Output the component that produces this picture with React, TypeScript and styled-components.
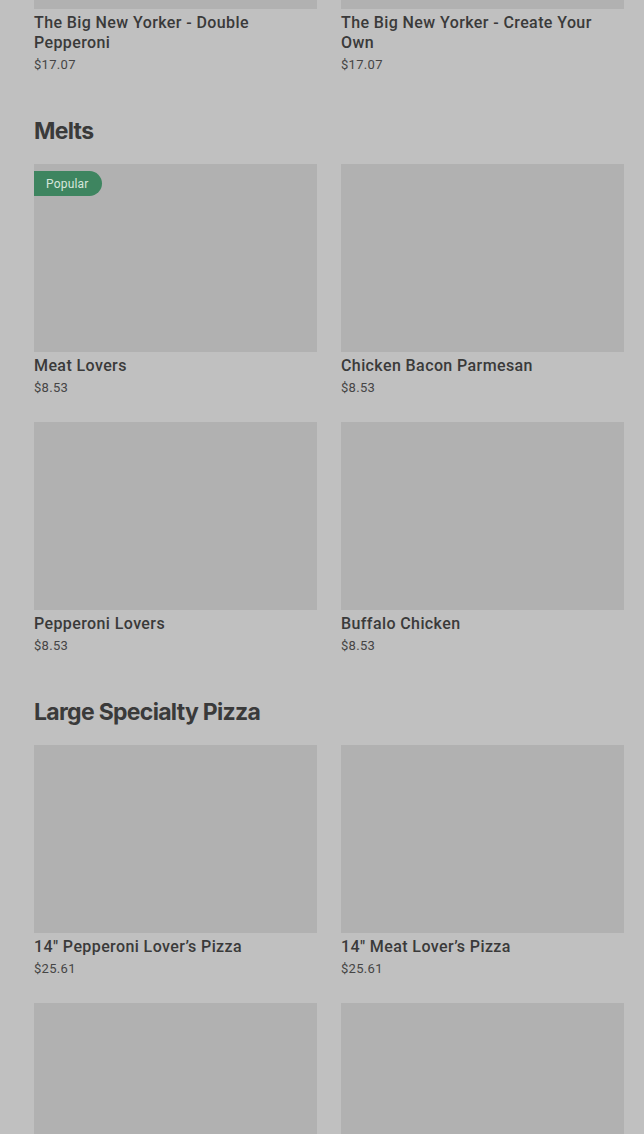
import styled, { createGlobalStyle } from 'styled-components';

const GlobalStyle = createGlobalStyle`
  html, body {
    margin: 0;
    padding: 0;
    background: #c0c0c0;
    overflow: hidden;
  }
  body {
    font-family: Roboto, "Liberation Sans", sans-serif;
    color: #3a3a3a;
  }
`;

type Item = { name: string; price: string; popular?: boolean };
type Section = { title?: string; items: Item[] };

const sections: Section[] = [
  {
    items: [
      { name: 'The Big New Yorker - Double Pepperoni', price: '$17.07' },
      { name: 'The Big New Yorker - Create Your Own', price: '$17.07' },
    ],
  },
  {
    title: 'Melts',
    items: [
      { name: 'Meat Lovers', price: '$8.53', popular: true },
      { name: 'Chicken Bacon Parmesan', price: '$8.53' },
      { name: 'Pepperoni Lovers', price: '$8.53' },
      { name: 'Buffalo Chicken', price: '$8.53' },
    ],
  },
  {
    title: 'Large Specialty Pizza',
    items: [
      { name: '14" Pepperoni Lover\u2019s Pizza', price: '$25.61' },
      { name: '14" Meat Lover\u2019s Pizza', price: '$25.61' },
      { name: '', price: '' },
      { name: '', price: '' },
    ],
  },
];

// page is scrolled: the first card row starts above the viewport
const Page = styled.main`
  margin-top: -179px;
  padding: 0 20px 0 34px;
`;

const MenuSection = styled.section`
  margin-bottom: 41px;
`;

const SectionTitle = styled.h2`
  margin: 0 0 17px;
  height: 32px;
  font-family: Inter, "Liberation Sans", sans-serif;
  font-size: 23px;
  font-weight: 700;
  letter-spacing: -0.7px;
  line-height: 32px;
  color: #3a3a3a;
`;

const Grid = styled.div`
  display: grid;
  grid-template-columns: 283px 283px;
  column-gap: 24px;
  row-gap: 25px;
`;

const Card = styled.article`
  display: flex;
  flex-direction: column;
`;

const Thumb = styled.div`
  position: relative;
  height: 188px;
  background: #b1b1b1;
`;

const Badge = styled.span`
  position: absolute;
  top: 7px;
  left: 0;
  height: 25px;
  padding: 0 13px 0 12px;
  display: flex;
  align-items: center;
  background: #3e8560;
  color: #d6e6dc;
  font-size: 12px;
  letter-spacing: 0.2px;
  border-radius: 0 13px 13px 0;
`;

const Name = styled.div`
  margin-top: 4px;
  font-size: 16px;
  line-height: 20px;
  font-weight: 500;
  letter-spacing: 0.4px;
  color: #3a3a3a;
`;

const Price = styled.div`
  margin-top: 3px;
  font-size: 13px;
  line-height: 18px;
  letter-spacing: 0.3px;
  color: #454545;
`;

export default function App() {
  return (
    <>
      <GlobalStyle />
      <Page>
        {sections.map((s, i) => (
          <MenuSection key={i}>
            {s.title && <SectionTitle>{s.title}</SectionTitle>}
            <Grid>
              {s.items.map((it, j) => (
                <Card key={j}>
                  <Thumb>{it.popular && <Badge>Popular</Badge>}</Thumb>
                  {it.name && <Name>{it.name}</Name>}
                  {it.price && <Price>{it.price}</Price>}
                </Card>
              ))}
            </Grid>
          </MenuSection>
        ))}
      </Page>
    </>
  );
}
